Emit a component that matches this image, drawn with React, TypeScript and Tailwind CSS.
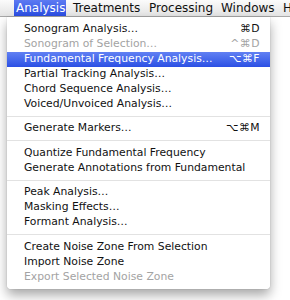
const barItems = [
  { name: 'Analysis', w: 'w-[52px] px-[2px] mr-[7px]' },
  { name: 'Treatments', w: 'w-[76px]' },
  { name: 'Processing', w: 'w-[72px]' },
  { name: 'Windows', w: 'w-[62px]' },
  { name: 'Help', w: '' },
];

type Row =
  | { sep: true }
  | { sep?: false; label: string; key?: string; disabled?: boolean; active?: boolean };

const rows: Row[] = [
  { label: 'Sonogram Analysis…', key: '⌘D' },
  { label: 'Sonogram of Selection…', key: '^⌘D', disabled: true },
  { label: 'Fundamental Frequency Analysis…', key: '⌥⌘F', active: true },
  { label: 'Partial Tracking Analysis…' },
  { label: 'Chord Sequence Analysis…' },
  { label: 'Voiced/Unvoiced Analysis…' },
  { sep: true },
  { label: 'Generate Markers…', key: '⌥⌘M' },
  { sep: true },
  { label: 'Quantize Fundamental Frequency' },
  { label: 'Generate Annotations from Fundamental' },
  { sep: true },
  { label: 'Peak Analysis…' },
  { label: 'Masking Effects…' },
  { label: 'Formant Analysis…' },
  { sep: true },
  { label: 'Create Noise Zone From Selection' },
  { label: 'Import Noise Zone' },
  { label: 'Export Selected Noise Zone', disabled: true },
];

export default function App() {
  return (
    <div className="relative w-[290px] h-[300px] overflow-hidden bg-white font-['Lucida_Grande','DejaVu_Sans',sans-serif] text-[#111]">
      {/* menu bar */}
      <div className="flex h-[17px] border-b border-[#a8a8a8] bg-gradient-to-b from-[#fbfbfb] to-[#e4e4e4] pl-[14px] text-[12px] leading-[16px] whitespace-nowrap">
        {barItems.map((b, i) => (
          <span
            key={b.name}
            className={
              'h-[16px] shrink-0 ' +
              b.w +
              (i === 0 ? ' text-white bg-gradient-to-b from-[#5d7af2] to-[#2b4de3]' : '')
            }
          >
            {b.name}
          </span>
        ))}
      </div>

      {/* dropdown */}
      <div className="absolute left-[7px] top-[17px] w-[263px] rounded-b-[4px] bg-white/[0.97] pt-[4.5px] pb-[4.5px] shadow-[0_6px_12px_rgba(0,0,0,0.35),0_0_1px_rgba(0,0,0,0.35)] text-[10.8px]">
        {rows.map((r, i) =>
          r.sep ? (
            <div key={i} className="flex h-[9.5px] items-center">
              <div className="h-px w-full bg-[#e2e2e2]" />
            </div>
          ) : (
            <div
              key={i}
              className={
                'flex h-[15px] items-center justify-between pl-[17px] pr-[10px] ' +
                (r.active
                  ? 'bg-gradient-to-b from-[#6180f3] to-[#2c4fe4] text-white'
                  : r.disabled
                  ? 'text-[#a3a3a3]'
                  : '')
              }
            >
              <span>{r.label}</span>
              {r.key && <span className="tracking-[0.5px]">{r.key}</span>}
            </div>
          )
        )}
      </div>
    </div>
  );
}
